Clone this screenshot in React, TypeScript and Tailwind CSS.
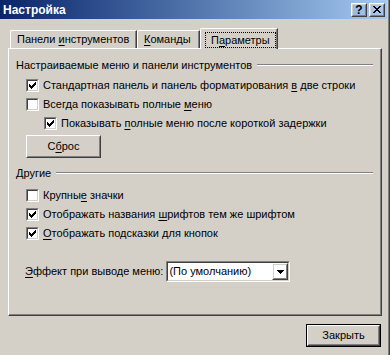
import React from "react";

const CheckMark = () => (
    <svg width="7" height="7" viewBox="0 0 7 7" shapeRendering="crispEdges">
        <path d="M0 2h1v3h-1zM1 3h1v3h-1zM2 4h1v3h-1zM3 3h1v3h-1zM4 2h1v3h-1zM5 1h1v3h-1zM6 0h1v3h-1z" fill="#000" />
    </svg>
);

function CheckBox({ checked }: { checked: boolean }) {
    return (
        <div className="w-[13px] h-[13px] shrink-0 flex border border-t-[#808080] border-l-[#808080] border-r-white border-b-white">
            <div className="flex-1 flex items-center justify-center bg-white border border-t-[#404040] border-l-[#404040] border-r-[#d4d0c8] border-b-[#d4d0c8]">
                {checked && <CheckMark />}
            </div>
        </div>
    );
}

function CheckRow({ checked, indent, children }: { checked: boolean; indent?: boolean; children: React.ReactNode }) {
    return (
        <div className={indent ? "h-[19px] flex items-center pl-[28px]" : "h-[19px] flex items-center pl-[10px]"}>
            <CheckBox checked={checked} />
            <span className="ml-[4px] whitespace-nowrap">{children}</span>
        </div>
    );
}

function GroupHeader({ children }: { children: React.ReactNode }) {
    return (
        <div className="h-[14px] flex items-center">
            <span className="whitespace-nowrap">{children}</span>
            <div className="flex-1 ml-[5px] h-[2px] border-t border-t-[#808080] border-b border-b-white" />
        </div>
    );
}

function RaisedButton({ className, children }: { className?: string; children: React.ReactNode }) {
    return (
        <div className={`flex border border-t-white border-l-white border-r-[#404040] border-b-[#404040] ${className ?? ""}`}>
            <div className="flex-1 flex items-center justify-center border border-t-[#d4d0c8] border-l-[#d4d0c8] border-r-[#808080] border-b-[#808080]">
                {children}
            </div>
        </div>
    );
}

// mnemonic underline
const U = ({ children }: { children: React.ReactNode }) => (
    <span className="underline underline-offset-[2px] decoration-1">{children}</span>
);

export default function App() {
    return (
        <div className="w-[390px] h-[355px] bg-[#d4d0c8] border-r border-r-[#404040] shadow-[inset_-1px_0_0_#808080] font-['Liberation_Sans',Arial,sans-serif] text-[11px] text-black overflow-hidden">
            {/* Title bar */}
            <div className="h-[19px] mr-[2px] bg-linear-to-r from-[#0a246a] to-[#a6caf0] flex items-center pl-[3px] pr-[2px]">
                <span className="flex-1 text-white font-bold text-[12px] leading-none">Настройка</span>
                <RaisedButton className="w-[16px] h-[14px]">
                    <span className="font-bold text-[12px] leading-none">?</span>
                </RaisedButton>
                <RaisedButton className="w-[16px] h-[14px] ml-[2px]">
                    <svg width="8" height="7" viewBox="0 0 8 7" shapeRendering="crispEdges">
                        <path d="M0 0h2v1h-2zM6 0h2v1h-2zM1 1h2v1h-2zM5 1h2v1h-2zM2 2h4v1h-4zM3 3h2v1h-2zM2 4h4v1h-4zM1 5h2v1h-2zM5 5h2v1h-2zM0 6h2v1h-2zM6 6h2v1h-2z" fill="#000" />
                    </svg>
                </RaisedButton>
            </div>

            {/* Tabs */}
            <div className="mt-[9px] h-[20px] flex items-end pl-[10px]">
                <div className="h-[18px] w-[127px] flex items-center pl-[6px] border-l border-t border-l-white border-t-white border-r border-r-[#404040] shadow-[inset_-1px_0_0_#808080] rounded-tl-[2px] whitespace-nowrap">
                    <span>Панели <U>и</U>нструментов</span>
                </div>
                <div className="h-[18px] w-[63px] flex items-center pl-[6px] border-l border-t border-l-white border-t-white border-r border-r-[#404040] shadow-[inset_-1px_0_0_#808080] rounded-tl-[2px] whitespace-nowrap">
                    <span><U>К</U>оманды</span>
                </div>
                <div className="relative z-10 h-[21px] w-[78px] -mb-[1px] flex items-start pt-[3px] pl-[4px] bg-[#d4d0c8] border-l border-t border-l-white border-t-white border-r border-r-[#404040] shadow-[inset_-1px_0_0_#808080] rounded-tl-[2px] whitespace-nowrap">
                    <span className="border border-dotted border-black px-[5px] h-[16px] flex items-center">
                        <span>П<U>а</U>раметры</span>
                    </span>
                </div>
            </div>

            {/* Panel */}
            <div className="ml-[8px] w-[374px] h-[268px] border border-t-white border-l-white border-r-[#404040] border-b-[#404040] shadow-[inset_-1px_-1px_0_#808080] pl-[7px] pr-[8px] pt-[9px]">
                <GroupHeader>Настраиваемые меню и панели инструментов</GroupHeader>
                <div className="mt-[4px]">
                    <CheckRow checked>
                        Стандартная панель и панель форматирования <U>в</U> две строки
                    </CheckRow>
                    <CheckRow checked={false}>
                        Всегда показывать полные <U>м</U>еню
                    </CheckRow>
                    <CheckRow checked indent>
                        Показывать <U>п</U>олные меню после короткой задержки
                    </CheckRow>
                </div>
                <RaisedButton className="ml-[10px] mt-[2px] w-[75px] h-[23px]">
                    <span>С<U>б</U>рос</span>
                </RaisedButton>

                <div className="mt-[8px]">
                    <GroupHeader>Другие</GroupHeader>
                </div>
                <div className="mt-[6px]">
                    <CheckRow checked={false}>
                        Крупны<U>е</U> значки
                    </CheckRow>
                    <CheckRow checked>
                        Отображать названия <U>ш</U>рифтов тем же шрифтом
                    </CheckRow>
                    <CheckRow checked>
                        <U>О</U>тображать подсказки для кнопок
                    </CheckRow>
                </div>

                <div className="mt-[18px] flex items-center pl-[9px]">
                    <span className="whitespace-nowrap"><U>Э</U>ффект при выводе меню:</span>
                    <div className="ml-[3px] w-[124px] h-[21px] flex border border-t-[#808080] border-l-[#808080] border-r-white border-b-white">
                        <div className="flex-1 flex items-center bg-white border border-t-[#404040] border-l-[#404040] border-r-[#d4d0c8] border-b-[#d4d0c8]">
                            <span className="flex-1 pl-[1px] whitespace-nowrap">(По умолчанию)</span>
                            <RaisedButton className="w-[16px] h-[17px]">
                                <svg width="7" height="4" viewBox="0 0 7 4" shapeRendering="crispEdges">
                                    <path d="M0 0h7v1h-7zM1 1h5v1h-5zM2 2h3v1h-3zM3 3h1v1h-1z" fill="#000" />
                                </svg>
                            </RaisedButton>
                        </div>
                    </div>
                </div>
            </div>

            {/* Footer */}
            <div className="mt-[8px] w-[381px] flex justify-end">
                <div className="w-[75px] h-[23px] flex border border-black">
                    <RaisedButton className="flex-1">
                        <span>Закрыть</span>
                    </RaisedButton>
                </div>
            </div>
        </div>
    );
}
